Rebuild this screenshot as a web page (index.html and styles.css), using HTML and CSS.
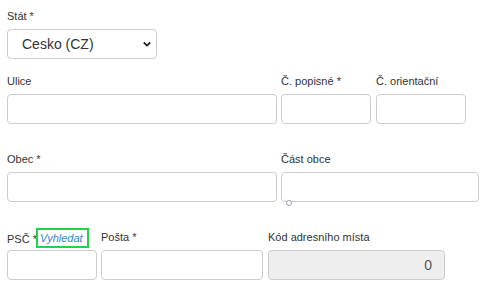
FILE: index.html
```html
<!DOCTYPE html>
<html lang="cs">
<head>
  <meta charset="UTF-8">
  <title>Adresa</title>
  <link rel="stylesheet" href="styles.css">
</head>
<body>
  <form class="address">
    <div class="row row-first">
      <div class="field w-150">
        <label>Stát *</label>
        <div class="select">
          <span>Cesko (CZ)</span>
          <svg width="10" height="7" viewBox="0 0 10 7"><path d="M1.8 1.5 L5 4.6 L8.2 1.5" fill="none" stroke="#222" stroke-width="1.8"/></svg>
        </div>
      </div>
    </div>

    <div class="row">
      <div class="field w-270">
        <label>Ulice</label>
        <input type="text">
      </div>
      <div class="field w-90 ml-4">
        <label>Č. popisné *</label>
        <input type="text">
      </div>
      <div class="field w-90 ml-5">
        <label>Č. orientační</label>
        <input type="text">
      </div>
    </div>

    <div class="row">
      <div class="field w-270">
        <label>Obec *</label>
        <input type="text">
      </div>
      <div class="field w-198 ml-4 handle-wrap">
        <label>Část obce</label>
        <input type="text">
        <span class="handle"></span>
      </div>
    </div>

    <div class="row row-last">
      <div class="field w-90">
        <label>PSČ * <a class="lookup" href="#">Vyhledat</a></label>
        <input type="text">
      </div>
      <div class="field w-162 ml-4">
        <label>Pošta *</label>
        <input type="text">
      </div>
      <div class="field w-177 ml-5">
        <label>Kód adresního místa</label>
        <input type="text" class="readonly" value="0" readonly>
      </div>
    </div>
  </form>
</body>
</html>
```

FILE: styles.css
```css
body {
  margin: 0;
  padding: 8px 0 0 7px;
  font-family: "Liberation Sans", Arial, sans-serif;
  color: #333;
  background: #fff;
}
.row {
  display: flex;
  align-items: flex-end;
  margin-bottom: 27px;
}
.row-first {
  margin-bottom: 14px;
}
.field {
  display: flex;
  flex-direction: column;
}
.field label {
  font-size: 11px;
  line-height: 16px;
  height: 16px;
  margin-bottom: 5px;
  white-space: nowrap;
}
.w-90 { width: 90px; }
.w-150 { width: 150px; }
.w-162 { width: 162px; }
.w-177 { width: 177px; }
.w-198 { width: 198px; }
.w-270 { width: 270px; }
.ml-4 { margin-left: 4px; }
.ml-5 { margin-left: 5px; }

input {
  box-sizing: border-box;
  height: 30px;
  width: 100%;
  border: 1px solid #ccc;
  border-radius: 4px;
  padding: 4px 12px;
  font-family: inherit;
  font-size: 14px;
  color: #555;
  background: #fff;
}
input.readonly {
  background: #eee;
  text-align: right;
}
.select {
  box-sizing: border-box;
  height: 30px;
  border: 1px solid #ccc;
  border-radius: 4px;
  display: flex;
  align-items: center;
  justify-content: space-between;
  padding: 0 4px 0 14px;
  font-size: 14px;
  color: #333;
}
.select svg {
  margin-top: 1px;
}
.lookup {
  display: inline-block;
  margin-left: -4px;
  padding: 0 4px 0 2px;
  border: 2px solid #1fd34a;
  color: #3b7fc4;
  font-style: italic;
  text-decoration: none;
  line-height: 16px;
  position: relative;
  top: -1px;
}
.handle-wrap {
  position: relative;
}
.handle {
  position: absolute;
  left: 5px;
  bottom: -4px;
  width: 4px;
  height: 4px;
  border: 1px solid #9aa0b8;
  border-radius: 50%;
  background: #fff;
}
```
